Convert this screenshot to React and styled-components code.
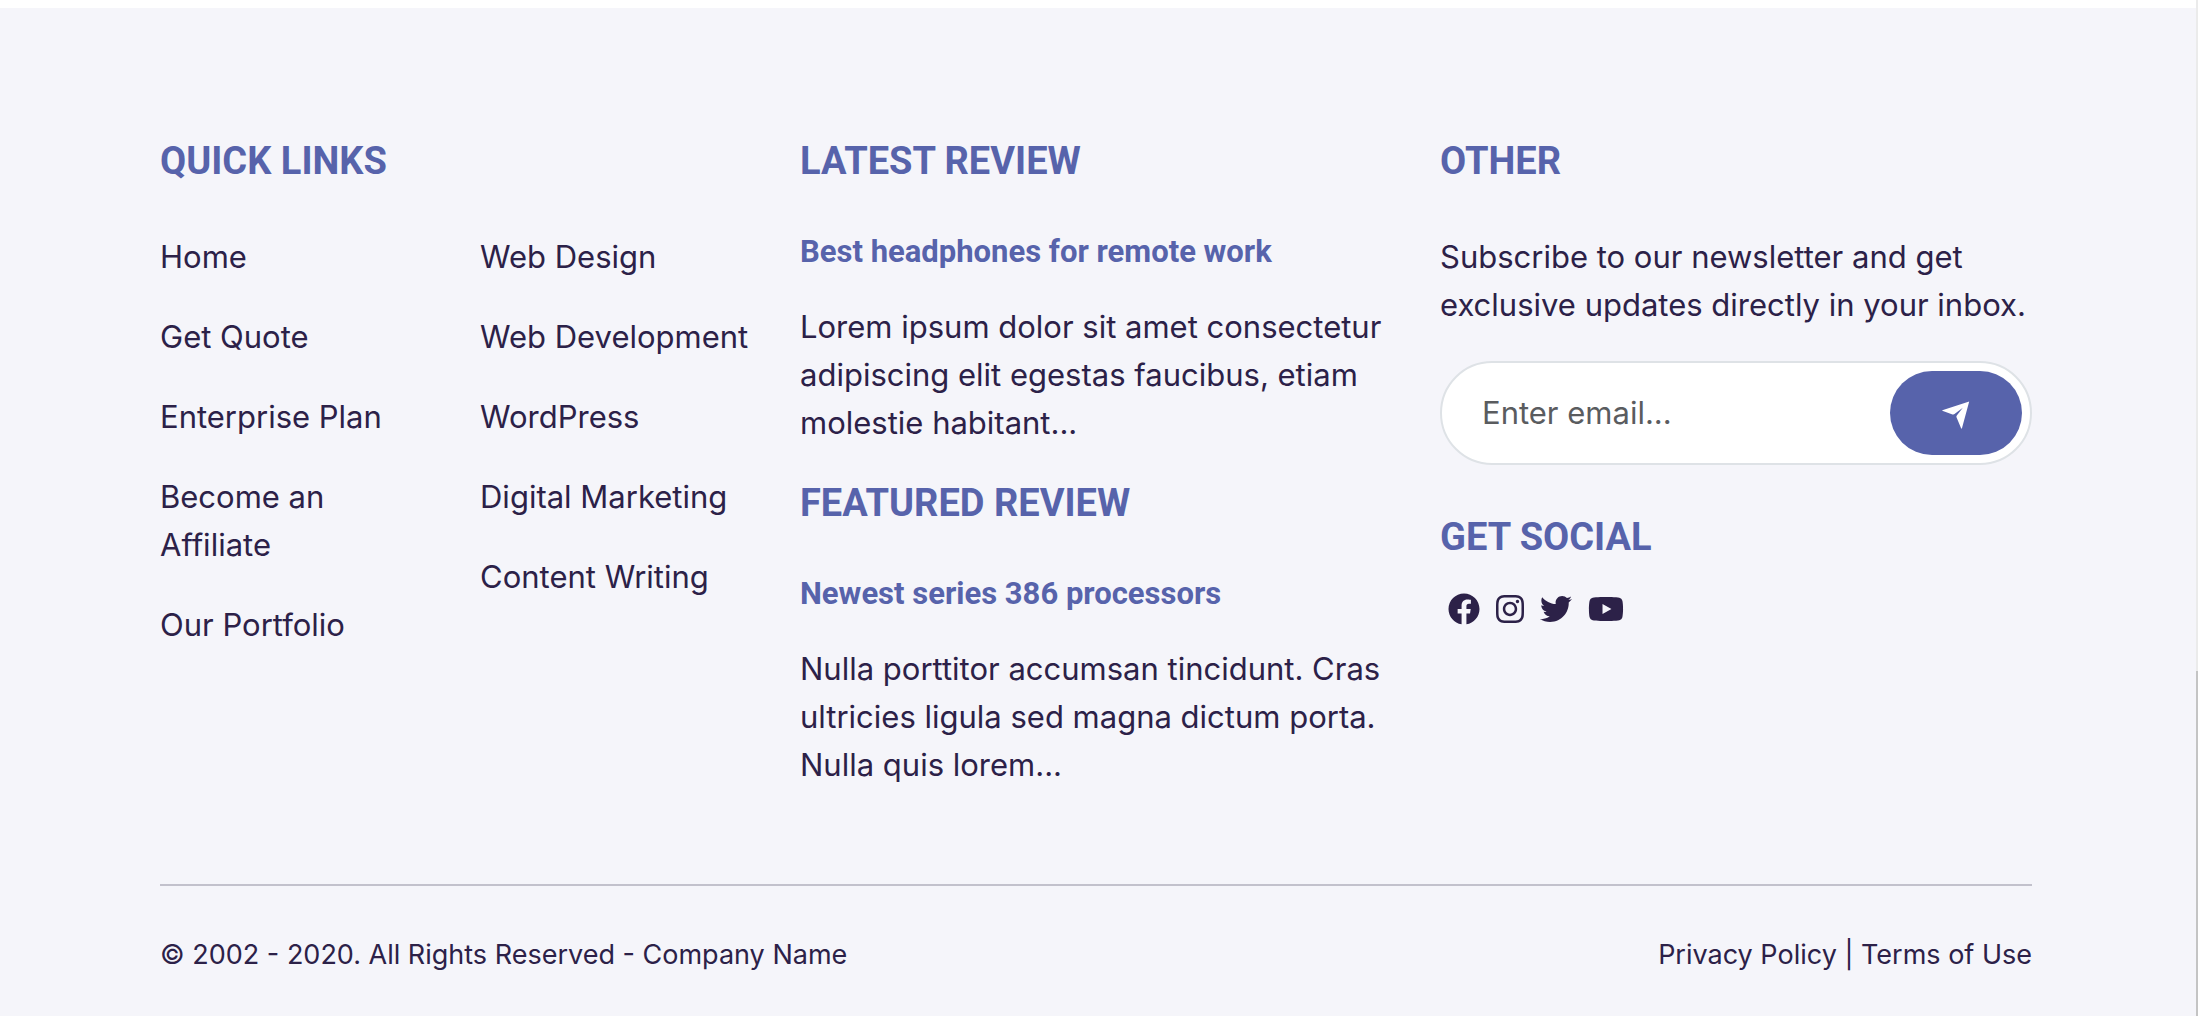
import React from "react";
import styled, { createGlobalStyle } from "styled-components";
import { FaFacebook, FaInstagram, FaTwitter, FaYoutube } from "react-icons/fa";

const Global = createGlobalStyle`
  *, *::before, *::after { box-sizing: border-box; }
  body {
    margin: 0;
    background: #fff;
    color: #2c2148;
    font-family: Inter, "Liberation Sans", sans-serif;
    font-size: 31px;
    line-height: 48px;
  }
  a { color: inherit; text-decoration: none; }
  a:hover { color: #5763ab; }
`;

const Page = styled.div`
  display: flex;
  min-height: 100vh;
`;

const Main = styled.main`
  flex: 1;
  min-width: 0;
  display: flex;
  flex-direction: column;
  padding-top: 8px;
`;

const Footer = styled.footer`
  flex: 1;
  background: #f5f5fa;
  padding: 129px 164px 39px 160px;
  @media (max-width: 1500px) {
    padding: 64px 48px 40px;
  }
`;

const Columns = styled.div`
  display: grid;
  grid-template-columns: repeat(3, minmax(0, 1fr));
  gap: 48px;
  padding-bottom: 95px;
  @media (max-width: 1500px) {
    grid-template-columns: 1fr;
  }
`;

const Column = styled.section`
  display: flex;
  flex-direction: column;
`;

const Heading = styled.h2`
  margin: 0 0 ${(p) => p.$gap || 48}px;
  color: #5763ab;
  font-family: Roboto, "Open Sans", sans-serif;
  font-size: 38px;
  font-weight: 700;
  line-height: 48px;
  text-transform: uppercase;
`;

const Title = styled.h3`
  margin: 0 0 32px;
  color: #5763ab;
  font-family: Roboto, "Open Sans", sans-serif;
  font-size: 31px;
  font-weight: 700;
  line-height: 38px;
`;

const Text = styled.p`
  margin: 0 0 32px;
`;

const LastText = styled(Text)`
  margin-bottom: 0;
`;

const LinkColumns = styled.div`
  display: grid;
  grid-template-columns: repeat(2, minmax(0, 1fr));
  gap: 48px;
`;

const LinkList = styled.ul`
  display: flex;
  flex-direction: column;
  gap: 32px;
  margin: 0;
  padding: 0;
  list-style: none;
`;

const Subscribe = styled.form`
  display: flex;
  height: 104px;
  margin-bottom: 48px;
  padding: 8px;
  border: 2px solid #dee2e6;
  border-radius: 52px;
  background: #fff;
`;

const EmailInput = styled.input`
  flex: 1;
  min-width: 0;
  padding: 0 32px;
  border: 0;
  outline: 0;
  background: transparent;
  color: #2c2148;
  font: inherit;
  &::placeholder {
    color: #5a5c5f;
    opacity: 1;
  }
`;

const SendButton = styled.button`
  display: flex;
  align-items: center;
  justify-content: center;
  width: 132px;
  padding: 4px 0 0;
  border: 0;
  border-radius: 42px;
  background: #5763ab;
  color: #fff;
  cursor: pointer;
`;

const Social = styled.nav`
  display: flex;
  align-items: center;
  gap: 16px;
  padding-left: 8px;
`;

const SocialLink = styled.a`
  display: flex;
  width: ${(p) => p.$width}px;
  svg {
    width: 100%;
    height: 32px;
  }
`;

const Legal = styled.div`
  display: flex;
  flex-wrap: wrap;
  justify-content: space-between;
  padding-top: 48px;
  border-top: 2px solid #c2c1cc;
  font-size: 27px;
  line-height: 42px;
`;

const Track = styled.div`
  display: flex;
  flex-direction: column;
  justify-content: flex-end;
  width: 2px;
  background: #ebebeb;
`;

const Thumb = styled.div`
  height: 34%;
  background: #c4c4c4;
`;

const pageLinks = ["Home", "Get Quote", "Enterprise Plan", "Become an Affiliate", "Our Portfolio"];
const serviceLinks = ["Web Design", "Web Development", "WordPress", "Digital Marketing", "Content Writing"];
const socials = [
  { name: "Facebook", Icon: FaFacebook, width: 32 },
  { name: "Instagram", Icon: FaInstagram, width: 28 },
  { name: "Twitter", Icon: FaTwitter, width: 32 },
  { name: "YouTube", Icon: FaYoutube, width: 36 },
];

function Links({ items }) {
  return (
    <LinkList>
      {items.map((item) => (
        <li key={item}>
          <a href="#">{item}</a>
        </li>
      ))}
    </LinkList>
  );
}

function SendIcon() {
  return (
    <svg width="28" height="28" viewBox="0 0 28 28" fill="currentColor" aria-hidden="true">
      <path d="M27.2 .4 .3 9.2v.6l10.2 3.6q1.2.4 2-.3L20.8 6.8 14.8 14.4q-.7.9-.3 1.9L19.2 27.6h.7z" />
    </svg>
  );
}

export default function App() {
  return (
    <Page>
      <Global />
      <Main>
        <Footer>
          <Columns>
            <Column>
              <Heading>Quick Links</Heading>
              <LinkColumns>
                <Links items={pageLinks} />
                <Links items={serviceLinks} />
              </LinkColumns>
            </Column>
            <Column>
              <Heading>Latest Review</Heading>
              <Title>Best headphones for remote work</Title>
              <Text>
                Lorem ipsum dolor sit amet consectetur adipiscing elit egestas faucibus, etiam molestie habitant...
              </Text>
              <Heading>Featured Review</Heading>
              <Title>Newest series 386 processors</Title>
              <LastText>
                Nulla porttitor accumsan tincidunt. Cras ultricies ligula sed magna dictum porta. Nulla quis lorem...
              </LastText>
            </Column>
            <Column>
              <Heading>Other</Heading>
              <Text>Subscribe to our newsletter and get exclusive updates directly in your inbox.</Text>
              <Subscribe onSubmit={(e) => e.preventDefault()}>
                <EmailInput type="email" placeholder="Enter email..." aria-label="Email address" />
                <SendButton type="submit" aria-label="Subscribe">
                  <SendIcon />
                </SendButton>
              </Subscribe>
              <Heading $gap={32}>Get Social</Heading>
              <Social aria-label="Social media">
                {socials.map(({ name, Icon, width }) => (
                  <SocialLink key={name} href="#" aria-label={name} $width={width}>
                    <Icon />
                  </SocialLink>
                ))}
              </Social>
            </Column>
          </Columns>
          <Legal>
            <span>© 2002 - 2020. All Rights Reserved - Company Name</span>
            <span>
              <a href="#">Privacy Policy</a> | <a href="#">Terms of Use</a>
            </span>
          </Legal>
        </Footer>
      </Main>
      <Track>
        <Thumb />
      </Track>
    </Page>
  );
}
